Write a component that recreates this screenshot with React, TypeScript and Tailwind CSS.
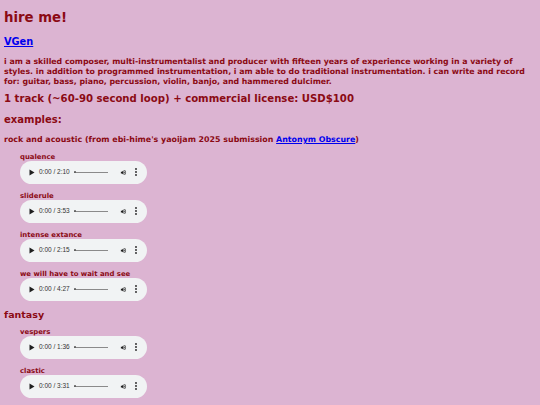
import React from 'react';

type Track = { title: string; length: string };

const ROCK: Track[] = [
  { title: 'qualence', length: '2:10' },
  { title: 'sliderule', length: '3:53' },
  { title: 'intense extance', length: '2:15' },
  { title: 'we will have to wait and see', length: '4:27' },
];

const FANTASY: Track[] = [
  { title: 'vespers', length: '1:36' },
  { title: 'clastic', length: '3:31' },
];

// small stand-in for the browser's native audio controls
function Player({ length }: { length: string }) {
  return (
    <div className="flex items-center w-[127px] h-[23px] rounded-full bg-[#f1f3f4] text-[#1f1f1f]">
      <svg width="6" height="7" viewBox="0 0 6 7" className="ml-[9px]">
        <path d="M0.5 0.5 L5.5 3.5 L0.5 6.5 Z" fill="#1f1f1f" />
      </svg>
      <span className="ml-[4px] text-[6.5px] leading-none font-normal text-[#333]" style={{ fontFamily: '"Liberation Sans", Arial, sans-serif' }}>
        0:00 / {length}
      </span>
      <div className="ml-auto flex items-center w-[34px] h-[1px] bg-[#8a8a8a] mr-[12px]">
        <div className="w-[2px] h-[2px] rounded-full bg-[#555]" />
      </div>
      <svg width="7" height="7" viewBox="0 0 24 24" className="mr-[8px]">
        <path d="M3 9v6h4l5 5V4L7 9H3z" fill="#1f1f1f" />
        <path d="M16.5 12A4.5 4.5 0 0 0 14 7.97v8.05A4.47 4.47 0 0 0 16.5 12z" fill="#1f1f1f" />
        <path d="M14 3.23v2.06a7 7 0 0 1 0 13.42v2.06A9 9 0 0 0 14 3.23z" fill="#1f1f1f" />
      </svg>
      <svg width="2" height="8" viewBox="0 0 2 8" className="mr-[10px]">
        <circle cx="1" cy="1" r="0.9" fill="#1f1f1f" />
        <circle cx="1" cy="4" r="0.9" fill="#1f1f1f" />
        <circle cx="1" cy="7" r="0.9" fill="#1f1f1f" />
      </svg>
    </div>
  );
}

function TrackList({ tracks, first }: { tracks: Track[]; first: string }) {
  return (
    <div className={`flex flex-col pl-[16px] ${first}`}>
      {tracks.map((t, i) => (
        <div key={t.title} className={i === 0 ? '' : 'mt-[8px]'}>
          <div className="text-[6.9px] leading-[8px]">{t.title}</div>
          <Player length={t.length} />
        </div>
      ))}
    </div>
  );
}

export default function App() {
  return (
    <div
      className="min-h-screen w-full bg-[#dcb4d2] text-[#8b0a14] font-bold px-[4px]"
      style={{ fontFamily: '"DejaVu Sans", Verdana, sans-serif' }}
    >
      <h1 className="pt-[9px] text-[13.3px] leading-[17px]">hire me!</h1>
      <a href="#" className="block mt-[9px] text-[9.8px] leading-[13px] text-[#0000ee] underline w-fit">VGen</a>
      <p className="mt-[9px] text-[7.8px] leading-[9.9px]">
        i am a skilled composer, multi-instrumentalist and producer with fifteen years of experience working in a variety of
        styles. in addition to programmed instrumentation, i am able to do traditional instrumentation. i can write and record
        for: guitar, bass, piano, percussion, violin, banjo, and hammered dulcimer.
      </p>
      <h2 className="mt-[5.5px] text-[10.15px] leading-[14px]">1 track (~60-90 second loop) + commercial license: USD$100</h2>
      <h2 className="mt-[7px] text-[10px] leading-[13px]">examples:</h2>
      <h3 className="mt-[8.5px] text-[7.9px] leading-[10px]">
        rock and acoustic (from ebi-hime's yaoijam 2025 submission{' '}
        <a href="#" className="text-[#0000ee] underline">Antonym Obscure</a>)
      </h3>
      <TrackList tracks={ROCK} first="mt-[8px]" />
      <h3 className="mt-[8px] text-[9.5px] leading-[11px]">fantasy</h3>
      <TrackList tracks={FANTASY} first="mt-[8px]" />
    </div>
  );
}
